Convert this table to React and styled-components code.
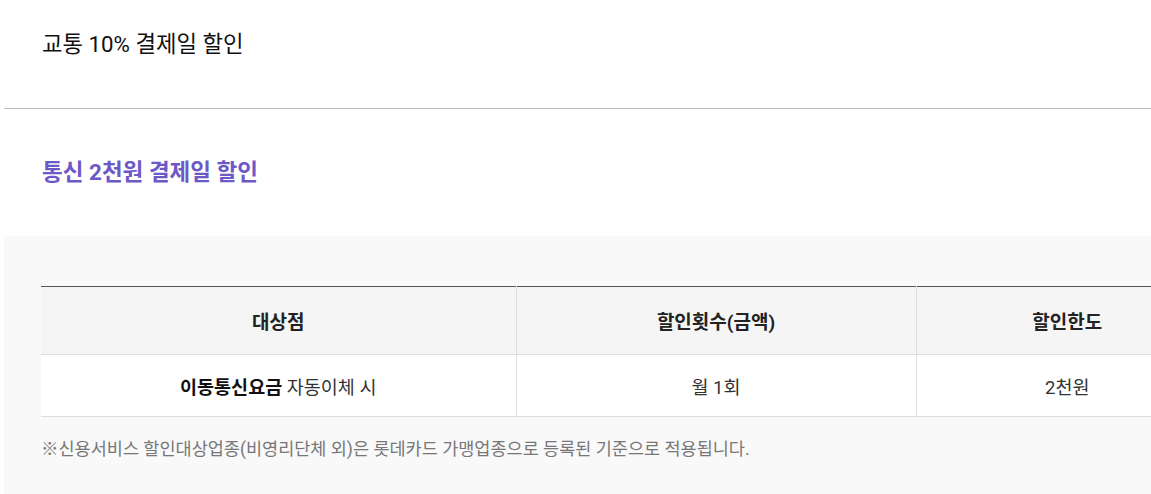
import React from 'react'
import styled, { createGlobalStyle } from 'styled-components'

const GlobalStyle = createGlobalStyle`
body{
    margin:0;
    background:#fff;
    overflow:hidden;
    font-family:Roboto, "Noto Sans CJK KR", sans-serif;
}
`

const rows = [
    { place: '이동통신요금', suffix: ' 자동이체 시', count: '월 1회', limit: '2천원' },
]

function App() {
    return (
        <Page>
            <GlobalStyle />
            <TopTitle>교통 10% 결제일 할인</TopTitle>
            <SectionTitle>통신 2천원 결제일 할인</SectionTitle>
            <Panel>
                <Table>
                    <colgroup>
                        <col style={{ width: 475 }} />
                        <col style={{ width: 400 }} />
                        <col style={{ width: 302 }} />
                    </colgroup>
                    <thead>
                        <tr>
                            <Th>대상점</Th>
                            <Th>할인횟수(금액)</Th>
                            <Th last>할인한도</Th>
                        </tr>
                    </thead>
                    <tbody>
                        {rows.map((r) => (
                            <tr key={r.place}>
                                <Td><strong>{r.place}</strong>{r.suffix}</Td>
                                <Td>{r.count}</Td>
                                <Td last>{r.limit}</Td>
                            </tr>
                        ))}
                    </tbody>
                </Table>
                <Note>※신용서비스 할인대상업종(비영리단체 외)은 롯데카드 가맹업종으로 등록된 기준으로 적용됩니다.</Note>
            </Panel>
        </Page>
    )
}

export default App

const Page = styled.div`
margin-left:4px;
width:1200px;
`
const TopTitle = styled.h2`
margin:0;
padding:30px 0 0 38px;
height:78px;
line-height:28px;
font-size:22.3px;
font-weight:400;
color:#111;
border-bottom:1px solid #bbb;
`
const SectionTitle = styled.h3`
margin:0;
padding:49px 0 0 38px;
height:78px;
line-height:28px;
font-size:22.5px;
font-weight:700;
color:#6c58c6;
`
const Panel = styled.div`
background:#f9f9f9;
padding:50px 0 40px 37px;
`
const Table = styled.table`
border-collapse:collapse;
table-layout:fixed;
width:1177px;
border-top:1px solid #555;
`
const Th = styled.th`
height:67px;
padding:0;
background:#f5f5f5;
font-size:19px;
font-weight:700;
color:#222;
text-align:center;
border-bottom:1px solid #ddd;
border-right:${(p) => (p.last ? 'none' : '1px solid #ddd')};
`
const Td = styled.td`
height:61px;
padding:0;
background:#fff;
font-size:18.5px;
color:#333;
text-align:center;
border-bottom:1px solid #ddd;
border-right:${(p) => (p.last ? 'none' : '1px solid #ddd')};
strong{
    font-weight:700;
    color:#111;
}
`
const Note = styled.p`
margin:20px 0 0;
font-size:17.5px;
line-height:24px;
color:#777;
`
